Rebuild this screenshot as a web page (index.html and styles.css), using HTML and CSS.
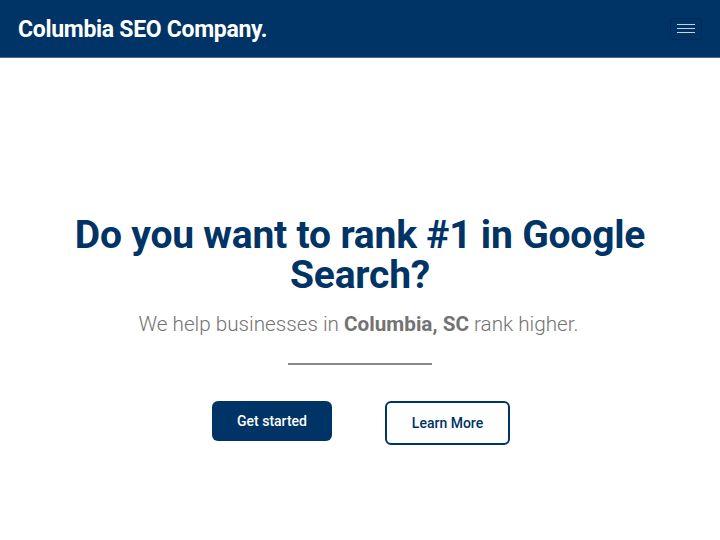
FILE: index.html
```html
<!DOCTYPE html>
<html>
<head>
<meta charset="utf-8">
<link rel="stylesheet" href="styles.css">
</head>
<body>
<header class="navbar">
  <div class="brand">Columbia SEO Company.</div>
  <button class="toggler" aria-label="menu">
    <span></span><span></span><span></span>
  </button>
</header>
<main class="hero">
  <h1 class="title">Do you want to rank #1 in Google Search?</h1>
  <p class="lead">We help businesses in <strong>Columbia, SC</strong> rank higher.</p>
  <hr class="divider">
  <div class="actions">
    <a class="btn btn-primary">Get started</a>
    <a class="btn btn-outline">Learn More</a>
  </div>
</main>
</body>
</html>
```

FILE: styles.css
```css
* { box-sizing: border-box; }
html, body { margin: 0; padding: 0; }
body {
  font-family: Roboto, "Liberation Sans", sans-serif;
  background: #fff;
  width: 720px;
  height: 540px;
  overflow: hidden;
}
.navbar {
  height: 58px;
  background: #003366;
  border-bottom: 1px solid #4a6a8f;
  display: flex;
  align-items: center;
  justify-content: space-between;
  padding: 0 18px 0 18px;
}
.brand {
  color: #fff;
  font-weight: 700;
  font-size: 23px;
  letter-spacing: -0.3px;
  margin-top: 1px;
}
.toggler {
  width: 32px;
  height: 22px;
  background: #003366;
  border: 1px solid #002a55;
  border-radius: 3px;
  padding: 0 6px;
  display: flex;
  flex-direction: column;
  justify-content: center;
  gap: 3px;
}
.toggler span {
  display: block;
  height: 1px;
  background: #c9d4e2;
}
.hero {
  display: flex;
  flex-direction: column;
  align-items: center;
  padding-top: 157px;
}
.title {
  margin: 0;
  width: 600px;
  text-align: center;
  color: #003366;
  font-size: 39px;
  line-height: 40px;
  font-weight: 700;
  letter-spacing: -0.2px;
}
.lead {
  margin: 15px 0 0 0;
  color: #737373;
  font-size: 20.7px;
  line-height: 28px;
  font-weight: 300;
  margin-left: -3px;
}
.lead strong { font-weight: 700; }
.divider {
  width: 144px;
  border: 0;
  border-top: 2px solid #888;
  margin: 25px 0 0 0;
}
.actions {
  display: flex;
  align-items: flex-start;
  gap: 53px;
  margin-top: 36px;
  margin-left: 2px;
}
.btn {
  display: flex;
  align-items: center;
  justify-content: center;
  font-size: 14px;
  font-weight: 500;
  border-radius: 6px;
  text-decoration: none;
}
.btn-primary {
  width: 120px;
  height: 40px;
  background: #003366;
  color: #fff;
}
.btn-outline {
  width: 125px;
  height: 44px;
  background: #fff;
  color: #003366;
  border: 2px solid #003366;
}
```
